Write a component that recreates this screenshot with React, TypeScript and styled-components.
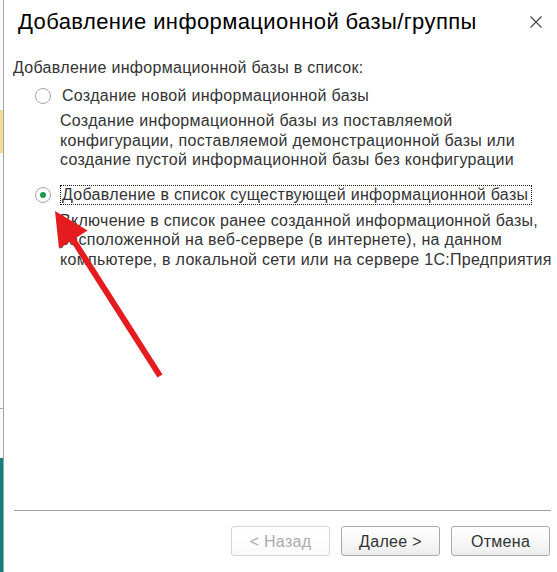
import React from "react";
import styled, { createGlobalStyle } from "styled-components";

const GlobalStyle = createGlobalStyle`
  html, body {
    margin: 0;
    padding: 0;
    background: #ffffff;
  }
  body {
    font-family: "Liberation Sans", Arial, sans-serif;
  }
`;

const Page = styled.div`
  position: relative;
  display: flex;
  width: 557px;
  height: 572px;
  overflow: hidden;
  background: #ffffff;
`;

/* Edge of the window that lies behind the dialog */
const BackWindowEdge = styled.div`
  flex: 0 0 3px;
  border-right: 1px solid #a3a3a3;
  background: linear-gradient(
    to bottom,
    #fafafa 0 110px,
    #f3d992 110px 153px,
    #fafafa 153px 408px,
    #a8a8a8 408px 409px,
    #fafafa 409px 458px,
    #10807e 458px
  );
`;

const Dialog = styled.div`
  flex: 1;
  display: flex;
  flex-direction: column;
  min-width: 0;
`;

const TitleBar = styled.div`
  display: flex;
  align-items: center;
  justify-content: space-between;
  padding: 8px 15px 0 14px;
`;

const Title = styled.h1`
  margin: 0;
  font-size: 22px;
  letter-spacing: 0.4px;
  line-height: 27px;
  font-weight: normal;
  color: #000000;
  white-space: nowrap;
`;

const CloseButton = styled.button`
  width: 12px;
  height: 12px;
  padding: 0;
  border: 0;
  background: transparent;
  display: flex;
  align-items: center;
  justify-content: center;
  cursor: pointer;
`;

const Body = styled.div`
  padding: 23px 0 0 9px;
  color: #333333;
  font-size: 16px;
  letter-spacing: 0.3px;
  line-height: 19.5px;
`;

const Prompt = styled.div`
  white-space: nowrap;
`;

const Options = styled.div`
  display: flex;
  flex-direction: column;
  gap: 15.5px;
  margin: 8px 0 0 22px;
`;

const Option = styled.label`
  display: grid;
  grid-template-columns: 16px 1fr;
  column-gap: 9px;
  row-gap: 5.5px;
  align-items: center;
  cursor: default;
`;

const RadioCircle = styled.span<{ $checked?: boolean }>`
  box-sizing: border-box;
  width: 16px;
  height: 16px;
  border-radius: 50%;
  border: 1px solid #a6a6a6;
  background: #ffffff;
  display: flex;
  align-items: center;
  justify-content: center;

  &::after {
    content: "";
    display: ${(p) => (p.$checked ? "block" : "none")};
    width: 6px;
    height: 6px;
    border-radius: 50%;
    background: #1a9a4e;
  }
`;

const OptionLabel = styled.span<{ $focused?: boolean }>`
  justify-self: start;
  border: 1px ${(p) => (p.$focused ? "dotted #1a1a1a" : "solid transparent")};
  padding: 0 3px 0 1px;
  line-height: 18px;
  color: #333333;
  white-space: nowrap;
`;

const Description = styled.div`
  grid-column: 2;
  white-space: nowrap;
  color: #333333;
`;

const Footer = styled.div`
  margin-top: auto;
  display: flex;
  flex-direction: column;
`;

const Separator = styled.hr`
  margin: 0 6px 0 10px;
  border: 0;
  border-top: 1px solid #a0a0a0;
  height: 0;
`;

const ButtonRow = styled.div`
  display: flex;
  justify-content: flex-end;
  gap: 11px;
  padding: 15px 7px 16px 0;
`;

const Button = styled.button`
  box-sizing: border-box;
  width: 99px;
  height: 30px;
  border-radius: 3px;
  border: 1px solid #a9a9a9;
  background: linear-gradient(to bottom, #ffffff 0%, #f6f6f6 60%, #ececec 100%);
  font-family: "Liberation Sans", Arial, sans-serif;
  font-size: 16px;
  letter-spacing: 0.3px;
  color: #333333;
  padding: 1px 0 0;
  cursor: pointer;

  &:disabled {
    border-color: #d6d6d6;
    color: #ababab;
    background: linear-gradient(to bottom, #ffffff 0%, #fafafa 100%);
    cursor: default;
  }
`;

const Annotation = styled.svg`
  position: absolute;
  left: 0;
  top: 0;
  width: 557px;
  height: 572px;
  pointer-events: none;
`;

type Choice = {
  label: string;
  lines: string[];
  checked?: boolean;
};

const choices: Choice[] = [
  {
    label: "Создание новой информационной базы",
    lines: [
      "Создание информационной базы из поставляемой",
      "конфигурации, поставляемой демонстрационной базы или",
      "создание пустой информационной базы без конфигурации",
    ],
  },
  {
    label: "Добавление в список существующей информационной базы",
    lines: [
      "Включение в список ранее созданной информационной базы,",
      "расположенной на веб-сервере (в интернете), на данном",
      "компьютере, в локальной сети или на сервере 1С:Предприятия",
    ],
    checked: true,
  },
];

export default function App() {
  return (
    <>
      <GlobalStyle />
      <Page>
        <BackWindowEdge />
        <Dialog>
          <TitleBar>
            <Title>Добавление информационной базы/группы</Title>
            <CloseButton aria-label="Закрыть">
              <svg width="12" height="12" viewBox="0 0 12 12">
                <path d="M0.5 0.5 L11.5 11.5 M11.5 0.5 L0.5 11.5" stroke="#444" strokeWidth="1.1" fill="none" />
              </svg>
            </CloseButton>
          </TitleBar>
          <Body>
            <Prompt>Добавление информационной базы в список:</Prompt>
            <Options>
              {choices.map((c) => (
                <Option key={c.label}>
                  <RadioCircle $checked={c.checked} />
                  <OptionLabel $focused={c.checked}>{c.label}</OptionLabel>
                  <Description>
                    {c.lines.map((l, i) => (
                      <React.Fragment key={i}>
                        {l}
                        {i < c.lines.length - 1 && <br />}
                      </React.Fragment>
                    ))}
                  </Description>
                </Option>
              ))}
            </Options>
          </Body>
          <Footer>
            <Separator />
            <ButtonRow>
              <Button disabled>&lt; Назад</Button>
              <Button>Далее &gt;</Button>
              <Button>Отмена</Button>
            </ButtonRow>
          </Footer>
        </Dialog>
        <Annotation viewBox="0 0 557 572">
          <line x1="160" y1="376" x2="72" y2="238" stroke="#e51c1f" strokeWidth="6" />
          <polygon points="55,211 87.6,230.4 59,248.8" fill="#e51c1f" />
        </Annotation>
      </Page>
    </>
  );
}
